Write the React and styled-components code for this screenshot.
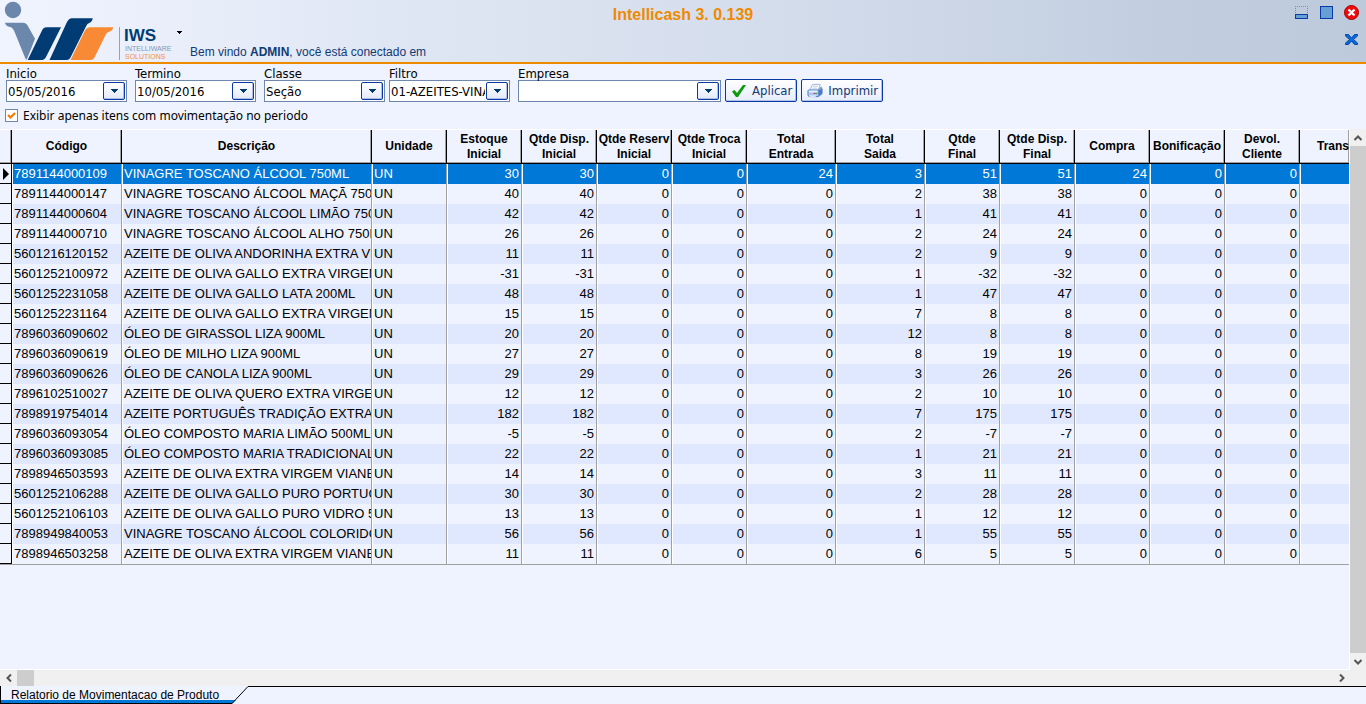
import styled, { createGlobalStyle } from "styled-components";
import { useState } from "react";

const GlobalStyle = createGlobalStyle`
  * {
    box-sizing: border-box;
  }
  body {
    margin: 0;
    background: #eef3ff;
    color: #000;
    font-family: "DejaVu Sans Condensed", Tahoma, "Noto Sans", sans-serif;
    font-size: 13px;
  }
`;

const Page = styled.div`
  display: flex;
  flex-direction: column;
  height: 100vh;
  overflow: hidden;
`;

/* ---------- Header ---------- */

const Header = styled.header`
  display: grid;
  grid-template-columns: 1fr auto 1fr;
  height: 64px;
  border-bottom: 2px solid #ee8a00;
  background: linear-gradient(to right, #f0f4ff 0%, #e0e7f4 28%, #d3dceb 58%, #c2cee0 85%, #bdcadc 100%);
  font-family: "Liberation Sans", Arial, sans-serif;
`;

const Brand = styled.div`
  display: flex;
  min-width: 0;
`;

const Logo = styled.svg`
  flex: none;
  width: 172px;
  height: 62px;
`;

const MenuButton = styled.button`
  display: flex;
  align-items: center;
  justify-content: center;
  width: 14px;
  height: 64px;
  padding: 0;
  border: none;
  background: none;
`;

const Welcome = styled.p`
  align-self: flex-end;
  margin: 0 0 4px 4px;
  color: #123a75;
  font-size: 12px;
  line-height: 16px;
  white-space: nowrap;
`;

const Title = styled.h1`
  margin: 5px 0 0;
  color: #ee8a00;
  font-size: 16px;
  line-height: 20px;
`;

const WindowButtons = styled.div`
  display: flex;
  flex-direction: column;
  align-items: flex-end;
  gap: 10px;
  padding: 4px 6px 0 0;
`;

const ButtonLine = styled.div`
  display: flex;
  gap: 9px;
`;

const IconButton = styled.button`
  display: flex;
  width: 16px;
  height: 17px;
  padding: 0;
  border: none;
  background: none;
`;

/* ---------- Filters ---------- */

const Filters = styled.form`
  padding: 4px 5px;
`;

const FilterRow = styled.div`
  display: flex;
  align-items: flex-end;
  gap: 8px;
  padding-left: 1px;
`;

const Group = styled.div`
  display: flex;
  align-items: flex-end;
  gap: 4px;
`;

const Field = styled.div`
  width: ${(props) => props.$width}px;
`;

const Label = styled.label`
  display: block;
  line-height: 12px;
`;

const Control = styled.div`
  display: grid;
  grid-template-columns: minmax(0, 1fr) 24px;
  align-items: center;
  height: 22px;
  border: 1px solid #6d87ad;
  background: #fff;

  input,
  select {
    grid-row: 1;
    grid-column: 1 / 3;
    width: 100%;
    height: 20px;
    margin: 0;
    padding: 0 24px 0 1px;
    border: none;
    background: none;
    color: #000;
    font: inherit;
    appearance: none;
    outline: none;
  }
`;

const DropMark = styled.span`
  grid-row: 1;
  grid-column: 2;
  justify-self: end;
  z-index: 1;
  display: flex;
  align-items: center;
  justify-content: center;
  width: 22px;
  height: 18px;
  margin-right: 1px;
  border: 1px solid #0a38a5;
  border-radius: 2px;
  background: linear-gradient(#fff, #e3e9fb);
  box-shadow: inset -1px -1px 0 #aebfe8;
  pointer-events: none;
`;

const ActionButton = styled.button`
  display: flex;
  align-items: center;
  gap: 5px;
  height: 23px;
  padding: 0 4px 0 5px;
  border: 1px solid #0a38a5;
  border-radius: 2px;
  background: linear-gradient(#fff, #e6ecfc);
  box-shadow: inset -1px -1px 0 #b4c3e8;
  color: #123a75;
  font: inherit;
`;

const CheckLine = styled.label`
  display: flex;
  align-items: center;
  gap: 5px;
  width: fit-content;
  height: 20px;
  margin-top: 3px;
  font-family: "Noto Sans", Tahoma, sans-serif;
  font-size: 12px;
`;

const CheckBox = styled.span`
  display: grid;
  place-items: center;
  width: 13px;
  height: 13px;

  input,
  svg {
    grid-area: 1 / 1;
  }
  svg {
    z-index: 1;
    pointer-events: none;
  }
  input {
    width: 13px;
    height: 13px;
    margin: 0;
    border: 1px solid #6d87ad;
    background: #fff;
    appearance: none;
  }
`;

/* ---------- Grid ---------- */

const GridArea = styled.main`
  flex: 1;
  display: grid;
  grid-template-columns: minmax(0, 1fr) 16px;
  grid-template-rows: minmax(0, 1fr) 16px;
  min-height: 0;
  background: #f0f0f0;
`;

const TableWrap = styled.div`
  overflow: hidden;
  border-top: 1px solid #fff;
  border-right: 1px solid #fff;
  border-bottom: 1px solid #fff;
  background: #eef3ff;
`;

const Table = styled.table`
  width: 100%;
  table-layout: fixed;
  border-collapse: separate;
  border-spacing: 0;
  border-bottom: 1px solid #a0a0a0;
  font-family: "Liberation Sans", Arial, sans-serif;
`;

const Th = styled.th`
  height: 34px;
  padding: 0;
  overflow: hidden;
  border-right: ${(props) => (props.$last ? "none" : "1px solid #000")};
  border-bottom: 1px solid #000;
  box-shadow: inset 0 -1px 0 #a0a0a0, inset -1px 0 0 #a0a0a0;
  text-align: ${(props) => (props.$last ? "right" : "center")};
  white-space: pre;
  font-size: 12px;
  line-height: 15px;
`;

const Row = styled.tr`
  background: ${(props) => (props.$selected ? "#0078d7" : props.$odd ? "#eef3ff" : "#e0e8ff")};
  color: ${(props) => (props.$selected ? "#fff" : "#000")};
`;

const Td = styled.td`
  height: 20px;
  padding: 0 2px;
  overflow: hidden;
  border-right: ${(props) => (props.$last ? "none" : "1px solid #a0a0a0")};
  box-shadow: inset 1px 0 0 #fff;
  text-align: ${(props) => (props.$text ? "left" : "right")};
  white-space: nowrap;
  font-size: 13px;
  line-height: 20px;
`;

const Marker = styled.td`
  height: 20px;
  padding: 0 0 0 3px;
  border-right: 1px solid #000;
  border-bottom: 1px solid #000;
  background: #eef3ff;

  svg {
    display: block;
  }
`;

const ScrollBar = styled.div`
  display: flex;
  flex-direction: ${(props) => (props.$vertical ? "column" : "row")};
  background: #f0f0f0;
`;

const ScrollButton = styled.button`
  display: flex;
  align-items: center;
  justify-content: center;
  width: ${(props) => (props.$vertical ? 16 : 17)}px;
  height: ${(props) => (props.$vertical ? 17 : 16)}px;
  padding: 0;
  border: none;
  background: none;
`;

const Thumb = styled.div`
  flex: ${(props) => (props.$full ? "1" : "0 0 17px")};
  background: #cdcdcd;
`;

const Track = styled.div`
  flex: 1;
`;

/* ---------- Footer tabs ---------- */

const Tabs = styled.footer`
  display: flex;
  height: 18px;
`;

const Tab = styled.button`
  height: 18px;
  padding: 0 4px 0 10px;
  border: none;
  border-left: 1px solid #000;
  border-bottom: 1px solid #000;
  background: linear-gradient(#eef3ff 14px, #0078d7 14px);
  color: #000;
  font: 12px "Liberation Sans", Arial, sans-serif;
  line-height: 16px;
`;

const TabEdge = styled.svg`
  flex: none;
  width: 26px;
  height: 18px;
`;

const TabLine = styled.div`
  flex: 1;
  border-top: 1px solid #000;
`;

const columns = [
  { title: "Código", width: 110, text: true },
  { title: "Descrição", width: 250, text: true },
  { title: "Unidade", width: 75, text: true },
  { title: "Estoque\nInicial", width: 75 },
  { title: "Qtde Disp.\nInicial", width: 75 },
  { title: "Qtde Reserv\nInicial", width: 75 },
  { title: "Qtde Troca\nInicial", width: 75 },
  { title: "Total\nEntrada", width: 89 },
  { title: "Total\nSaida", width: 89 },
  { title: "Qtde\nFinal", width: 75 },
  { title: "Qtde Disp.\nFinal", width: 75 },
  { title: "Compra", width: 75 },
  { title: "Bonificação", width: 75 },
  { title: "Devol.\nCliente", width: 75 },
  { title: "Trans" },
];

// código, descrição, estoque inicial, entrada, saida, final, compra
const products = [
  ["7891144000109", "VINAGRE TOSCANO ÁLCOOL 750ML", 30, 24, 3, 51, 24],
  ["7891144000147", "VINAGRE TOSCANO ÁLCOOL MAÇÃ 750ML", 40, 0, 2, 38, 0],
  ["7891144000604", "VINAGRE TOSCANO ÁLCOOL LIMÃO 750ML", 42, 0, 1, 41, 0],
  ["7891144000710", "VINAGRE TOSCANO ÁLCOOL ALHO 750ML", 26, 0, 2, 24, 0],
  ["5601216120152", "AZEITE DE OLIVA ANDORINHA EXTRA VIRGEM", 11, 0, 2, 9, 0],
  ["5601252100972", "AZEITE DE OLIVA GALLO EXTRA VIRGEM", -31, 0, 1, -32, 0],
  ["5601252231058", "AZEITE DE OLIVA GALLO LATA 200ML", 48, 0, 1, 47, 0],
  ["5601252231164", "AZEITE DE OLIVA GALLO EXTRA VIRGEM", 15, 0, 7, 8, 0],
  ["7896036090602", "ÓLEO DE GIRASSOL LIZA 900ML", 20, 0, 12, 8, 0],
  ["7896036090619", "ÓLEO DE MILHO LIZA 900ML", 27, 0, 8, 19, 0],
  ["7896036090626", "ÓLEO DE CANOLA LIZA 900ML", 29, 0, 3, 26, 0],
  ["7896102510027", "AZEITE DE OLIVA QUERO EXTRA VIRGEM", 12, 0, 2, 10, 0],
  ["7898919754014", "AZEITE PORTUGUÊS TRADIÇÃO EXTRA VIRGEM", 182, 0, 7, 175, 0],
  ["7896036093054", "ÓLEO COMPOSTO MARIA LIMÃO 500ML", -5, 0, 2, -7, 0],
  ["7896036093085", "ÓLEO COMPOSTO MARIA TRADICIONAL", 22, 0, 1, 21, 0],
  ["7898946503593", "AZEITE DE OLIVA EXTRA VIRGEM VIANEZ", 14, 0, 3, 11, 0],
  ["5601252106288", "AZEITE DE OLIVA GALLO PURO PORTUGAL", 30, 0, 2, 28, 0],
  ["5601252106103", "AZEITE DE OLIVA GALLO PURO VIDRO 500ML", 13, 0, 1, 12, 0],
  ["7898949840053", "VINAGRE TOSCANO ÁLCOOL COLORIDO", 56, 0, 1, 55, 0],
  ["7898946503258", "AZEITE DE OLIVA EXTRA VIRGEM VIANEZ", 11, 0, 6, 5, 0],
];

const toCells = ([codigo, descricao, inicial, entrada, saida, final, compra]) => [
  codigo, descricao, "UN", inicial, inicial, 0, 0, entrada, saida, final, final, compra, 0, 0, "",
];

const Arrow = () => (
  <svg width="7" height="4" viewBox="0 0 7 4" shapeRendering="crispEdges">
    <path d="M0 0h7v1H6v1H5v1H4v1H3V3H2V2H1V1H0z" fill="#003c73" />
  </svg>
);

const Chevron = ({ turn }) => (
  <svg width="10" height="10" viewBox="0 0 10 10">
    <path d="M1.5 7 5 3.5 8.5 7" fill="none" stroke="#555" strokeWidth="2" transform={`rotate(${turn} 5 5)`} />
  </svg>
);

const IwsLogo = () => (
  <Logo viewBox="0 0 172 62" role="img" aria-label="IWS Intelliware Solutions">
    <circle cx="13" cy="10" r="8.2" fill="#6b87ab" />
    <path d="M5 22.700h18q3.500 0 5 3.500l7 12.500-7.700 19.500L26 60 15 33q-2-5.500-5-6-4-.500-5-4z" fill="#6b87ab" />
    <path d="M27.700 60 42 30.500q1.500-3.200 4.500-3.200H61L46 57q-1.500 3-3.500 3z" fill="#003c73" />
    <path d="M49.500 60 66.500 23q2-4.700 5.500-4.700h20.700q-.500 3.700-3.500 4.700-2 .500-3 3L71 56.500q-1.500 3.500-4.500 3.500z" fill="#003c73" />
    <path d="M70.500 60 84.500 31.500q2-4.200 6-4.200h22.700q-.500 3.500-4 4.500-2.500.700-3.500 3L95 56.500q-1.500 3.500-4.500 3.500z" fill="#f88a35" />
    <path d="M119.500 27v33" stroke="#8fa2bf" />
    <text x="124" y="41" fontSize="17" fontWeight="bold" fill="#003c73">IWS</text>
    <text x="125" y="51" fontSize="7" fill="#8496b5">INTELLIWARE</text>
    <text x="125" y="59" fontSize="7" fill="#f2904a">SOLUTIONS</text>
  </Logo>
);

const DropField = ({ id, label, width, children }) => (
  <Field $width={width}>
    <Label htmlFor={id}>{label}</Label>
    <Control>
      {children}
      <DropMark>
        <Arrow />
      </DropMark>
    </Control>
  </Field>
);

const App = () => {
  const [filters, setFilters] = useState({
    inicio: "05/05/2016",
    termino: "10/05/2016",
    classe: "Seção",
    filtro: "01-AZEITES-VINAGRE",
    empresa: "",
    movimentacao: true,
  });
  const [selected, setSelected] = useState(0);

  const handleChange = (e) => {
    const { name, type, value, checked } = e.target;
    setFilters({ ...filters, [name]: type === "checkbox" ? checked : value });
  };

  const handleSubmit = (e) => {
    e.preventDefault();
  };

  return (
    <Page>
      <GlobalStyle />
      <Header>
        <Brand>
          <IwsLogo />
          <MenuButton type="button" aria-label="Menu">
            <svg width="5" height="3" viewBox="0 0 5 3" shapeRendering="crispEdges">
              <path d="M0 0h5v1H4v1H3v1H2V2H1V1H0z" />
            </svg>
          </MenuButton>
          <Welcome>
            Bem vindo <b>ADMIN</b>, você está conectado em
          </Welcome>
        </Brand>
        <Title>Intellicash 3. 0.139</Title>
        <WindowButtons>
          <ButtonLine>
            <IconButton type="button" aria-label="Minimizar">
              <svg width="16" height="17" viewBox="0 0 16 17" shapeRendering="crispEdges">
                <path d="M1.500 9V2.500h12V9" fill="none" stroke="#5b9bd5" strokeDasharray="1 1" />
                <path d="M1.500 10.500h12v4h-12z" fill="#669fd3" stroke="#0a38a5" />
              </svg>
            </IconButton>
            <IconButton type="button" aria-label="Maximizar">
              <svg width="16" height="17" viewBox="0 0 16 17" shapeRendering="crispEdges">
                <path d="M1.500 2.500h12v12h-12z" fill="#669fd3" stroke="#0a38a5" />
              </svg>
            </IconButton>
            <IconButton type="button" aria-label="Fechar">
              <svg width="16" height="17" viewBox="0 0 16 17">
                <circle cx="7.500" cy="8.500" r="7" fill="#f00a0a" stroke="#a80000" />
                <path d="m4.500 5.500 6 6m0-6-6 6" stroke="#fff" strokeWidth="2.400" />
              </svg>
            </IconButton>
          </ButtonLine>
          <IconButton type="button" aria-label="Fechar aba">
            <svg width="16" height="17" viewBox="0 0 16 17">
              <path d="M1.500 3.500h3l3 3.500 3-3.500h3v1.500l-4 3.500 4 3.500v1.500h-3l-3-3.500-3 3.500h-3V12l4-3.500-4-3.500z" fill="#0a6ad6" stroke="#0a45b0" />
            </svg>
          </IconButton>
        </WindowButtons>
      </Header>

      <Filters onSubmit={handleSubmit}>
        <FilterRow>
          <DropField id="inicio" label="Inicio" width={121}>
            <input id="inicio" name="inicio" value={filters.inicio} onChange={handleChange} />
          </DropField>
          <DropField id="termino" label="Termino" width={121}>
            <input id="termino" name="termino" value={filters.termino} onChange={handleChange} />
          </DropField>
          <Group>
            <DropField id="classe" label="Classe" width={121}>
              <select id="classe" name="classe" value={filters.classe} onChange={handleChange}>
                <option>Seção</option>
              </select>
            </DropField>
            <DropField id="filtro" label="Filtro" width={121}>
              <select id="filtro" name="filtro" value={filters.filtro} onChange={handleChange}>
                <option>01-AZEITES-VINAGRE</option>
              </select>
            </DropField>
          </Group>
          <Group>
            <DropField id="empresa" label="Empresa" width={203}>
              <select id="empresa" name="empresa" value={filters.empresa} onChange={handleChange}>
                <option value=""></option>
              </select>
            </DropField>
            <ActionButton type="submit">
              <svg width="16" height="16" viewBox="0 0 16 16">
                <path d="M1 8.500 3.500 7 6 10l6-8h3L7 14H5z" fill="#0a9a0a" />
              </svg>
              Aplicar
            </ActionButton>
            <ActionButton type="button">
              <svg width="16" height="16" viewBox="0 0 17 16">
                <path d="M6 1h8l-2 6H3z" fill="#fff" stroke="#9ab4dc" />
                <path d="M6.500 3h5m-6 2h5" stroke="#b5c6e2" />
                <path d="M1 8q0-1 1-1h10l3-3 1 2v5l-4 3H3q-2 0-2-2z" fill="#a9c6f0" stroke="#4a76c0" />
                <path d="M12 7.500v6l4-3V5.500z" fill="#4a78c4" />
                <path d="M2 8.500h9" stroke="#e8f1ff" strokeWidth="2" />
                <path d="M7 10.500h2" stroke="#d22" />
                <path d="M9 10.500h2" stroke="#2a2" />
                <path d="M2 12.500h8l-1 2H3z" fill="#dbe8fb" />
              </svg>
              Imprimir
            </ActionButton>
          </Group>
        </FilterRow>
        <CheckLine>
          <CheckBox>
            <input type="checkbox" name="movimentacao" checked={filters.movimentacao} onChange={handleChange} />
            {filters.movimentacao && (
              <svg width="9" height="9" viewBox="0 0 9 9">
                <path d="M1 4 3.500 6.500 8 2" fill="none" stroke="#f57c00" strokeWidth="2.200" />
              </svg>
            )}
          </CheckBox>
          Exibir apenas itens com movimentação no periodo
        </CheckLine>
      </Filters>

      <GridArea>
        <TableWrap>
          <Table>
            <colgroup>
              <col width="12" />
              {columns.map((col, i) => (
                <col key={i} width={col.width} />
              ))}
            </colgroup>
            <thead>
              <tr>
                <Th aria-label="Linha atual" />
                {columns.map((col, i) => (
                  <Th key={i} $last={i === columns.length - 1}>
                    {col.title}
                  </Th>
                ))}
              </tr>
            </thead>
            <tbody>
              {products.map((product, i) => (
                <Row key={product[0]} $selected={i === selected} $odd={i % 2 === 1} onClick={() => setSelected(i)}>
                  <Marker>
                    {i === selected && (
                      <svg width="6" height="12" viewBox="0 0 6 12">
                        <path d="M0 0v12l6-6z" />
                      </svg>
                    )}
                  </Marker>
                  {toCells(product).map((cell, j) => (
                    <Td key={j} $text={columns[j].text} $last={j === columns.length - 1}>
                      {cell}
                    </Td>
                  ))}
                </Row>
              ))}
            </tbody>
          </Table>
        </TableWrap>
        <ScrollBar $vertical>
          <ScrollButton $vertical type="button" aria-label="Rolar para cima">
            <Chevron turn={0} />
          </ScrollButton>
          <Thumb $full />
          <ScrollButton $vertical type="button" aria-label="Rolar para baixo">
            <Chevron turn={180} />
          </ScrollButton>
        </ScrollBar>
        <ScrollBar>
          <ScrollButton type="button" aria-label="Rolar para a esquerda">
            <Chevron turn={-90} />
          </ScrollButton>
          <Thumb />
          <Track />
          <ScrollButton type="button" aria-label="Rolar para a direita">
            <Chevron turn={90} />
          </ScrollButton>
        </ScrollBar>
      </GridArea>

      <Tabs>
        <Tab type="button">Relatorio de Movimentacao de Produto</Tab>
        <TabEdge viewBox="0 0 26 18">
          <path d="M0 14h13l-4 4H0z" fill="#0078d7" />
          <path d="M0 17.500h9L25 .500h1" fill="none" stroke="#000" />
        </TabEdge>
        <TabLine />
      </Tabs>
    </Page>
  );
};

export default App;
